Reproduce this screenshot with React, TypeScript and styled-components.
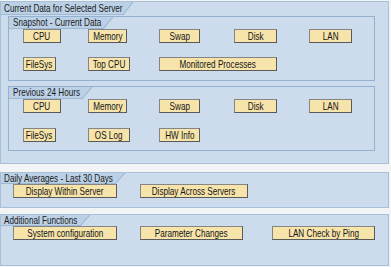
import React from 'react'
import styled, { createGlobalStyle } from 'styled-components'

const GlobalStyle = createGlobalStyle`
  html, body {
    margin: 0;
    padding: 0;
    background: #f3f4f5;
  }
  body {
    font-family: 'Liberation Sans', Arial, sans-serif;
    font-size: 11px;
    color: #1a1a1a;
  }
`

// the screen is drawn in a narrow, squeezed font
const Label = styled.span<{ $origin?: string }>`
  display: inline-block;
  transform: scaleX(0.74);
  transform-origin: ${(props) => props.$origin || 'center'} center;
  white-space: nowrap;
`

const Page = styled.div`
  display: flex;
  flex-direction: column;
  padding: 1px 2px 0 0;
`

const Group = styled.div<{ $mt?: number }>`
  display: flex;
  flex-direction: column;
  align-items: flex-start;
  margin-top: ${(props) => (props.$mt || 0) + 'px'};
  border: 1px solid #a7bfd8;
  background: #cddcec;
`

const Title = styled.div<{ $h: number; $w: number }>`
  position: relative;
  box-sizing: border-box;
  width: ${(props) => props.$w + 'px'};
  height: ${(props) => props.$h + 1 + 'px'};
  line-height: ${(props) => props.$h + 'px'};
  padding: 0 0 0 3px;
  margin-right: 10px;
  background: #bcd1e6;
  border-bottom: 1px solid #9fb9d4;
  &::after {
    content: '';
    position: absolute;
    top: 0;
    bottom: -1px;
    right: -10px;
    width: 10px;
    background: linear-gradient(
      to bottom right,
      #bcd1e6 calc(50% - 0.8px),
      #8fb0cf 50%,
      transparent calc(50% + 0.8px)
    );
  }
`

const OuterBody = styled.div`
  align-self: stretch;
  display: flex;
  flex-direction: column;
  gap: 5px;
  padding: 1px 13px 12px 7px;
`

const Frame = styled(Group)`
  border-color: #93b2d1;
  .title {
    padding-left: 4px;
  }
`

const ButtonGrid = styled.div<{ $cols: string; $pad: string; $gap?: number }>`
  align-self: stretch;
  display: grid;
  grid-template-columns: ${(props) => props.$cols};
  row-gap: ${(props) => (props.$gap || 14) + 'px'};
  padding: ${(props) => props.$pad};
`

const Btn = styled.button<{ $w: number; $span?: number }>`
  grid-column: span ${(props) => props.$span || 1};
  display: flex;
  justify-content: center;
  align-items: center;
  width: ${(props) => props.$w + 'px'};
  height: 14px;
  box-sizing: border-box;
  padding: 0;
  overflow: visible;
  border: 1px solid #858585;
  border-right-color: #5a5a5a;
  border-bottom-color: #5a5a5a;
  background: #f7e4aa;
  font: inherit;
  line-height: 12px;
  color: #151515;
`

const serverCols = '65px 71px 75px 75px auto'
const funcCols = '127px 132px auto'

const App = () => (
  <>
    <GlobalStyle />
    <Page>
      <Group>
        <Title $h={12} $w={122}>
          <Label $origin="left">Current Data for Selected Server</Label>
        </Title>
        <OuterBody>
          <Frame>
            <Title $h={11} $w={94} className="title">
              <Label $origin="left">Snapshot - Current Data</Label>
            </Title>
            <ButtonGrid $cols={serverCols} $pad="0 0 9px 14px">
              <Btn $w={38}><Label>CPU</Label></Btn>
              <Btn $w={39}><Label>Memory</Label></Btn>
              <Btn $w={41}><Label>Swap</Label></Btn>
              <Btn $w={43}><Label>Disk</Label></Btn>
              <Btn $w={43}><Label>LAN</Label></Btn>
              <Btn $w={33}><Label>FileSys</Label></Btn>
              <Btn $w={42}><Label>Top CPU</Label></Btn>
              <Btn $w={118} $span={2}><Label>Monitored Processes</Label></Btn>
            </ButtonGrid>
          </Frame>
          <Frame>
            <Title $h={11} $w={73} className="title">
              <Label $origin="left">Previous 24 Hours</Label>
            </Title>
            <ButtonGrid $cols={serverCols} $pad="0 0 8px 14px" $gap={15}>
              <Btn $w={38}><Label>CPU</Label></Btn>
              <Btn $w={39}><Label>Memory</Label></Btn>
              <Btn $w={41}><Label>Swap</Label></Btn>
              <Btn $w={43}><Label>Disk</Label></Btn>
              <Btn $w={43}><Label>LAN</Label></Btn>
              <Btn $w={33}><Label>FileSys</Label></Btn>
              <Btn $w={42}><Label>OS Log</Label></Btn>
              <Btn $w={41}><Label>HW Info</Label></Btn>
            </ButtonGrid>
          </Frame>
        </OuterBody>
      </Group>
      <Group $mt={8}>
        <Title $h={10} $w={114}>
          <Label $origin="left">Daily Averages - Last 30 Days</Label>
        </Title>
        <ButtonGrid $cols={funcCols} $pad="0 0 9px 12px">
          <Btn $w={104}><Label>Display Within Server</Label></Btn>
          <Btn $w={108}><Label>Display Across Servers</Label></Btn>
        </ButtonGrid>
      </Group>
      <Group $mt={6}>
        <Title $h={10} $w={79}>
          <Label $origin="left">Additional Functions</Label>
        </Title>
        <ButtonGrid $cols={funcCols} $pad="0 0 25px 12px">
          <Btn $w={104}><Label>System configuration</Label></Btn>
          <Btn $w={103}><Label>Parameter Changes</Label></Btn>
          <Btn $w={103}><Label>LAN Check by Ping</Label></Btn>
        </ButtonGrid>
      </Group>
    </Page>
  </>
)

export default App
